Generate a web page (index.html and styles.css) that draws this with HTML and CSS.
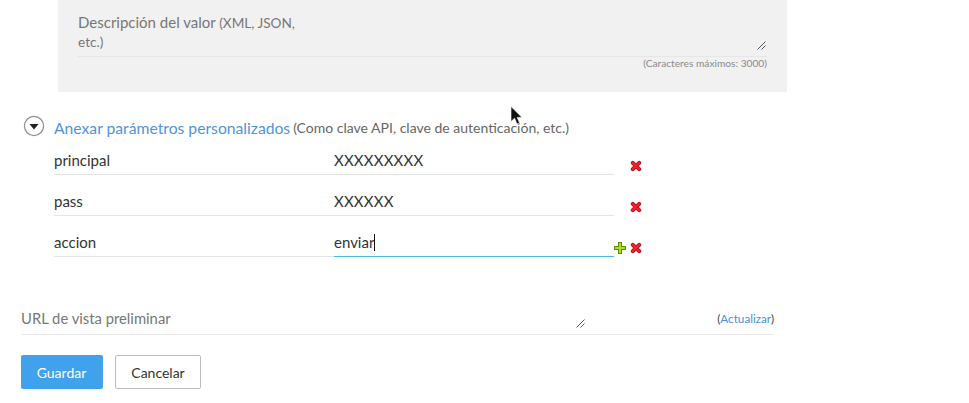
FILE: index.html
```html
<!DOCTYPE html>
<html lang="es">
<head>
<meta charset="utf-8">
<title>Parámetros</title>
<link rel="stylesheet" href="styles.css">
</head>
<body>
<section class="panel">
  <div class="desc-field">
    <div class="desc-text">Descripción del valor <span class="desc-small">(XML, JSON,</span><br><span class="desc-small">etc.)</span></div>
    <svg class="grip grip-desc" width="9" height="9" viewBox="0 0 9 9"><path d="M0.5 8.5L8.5 0.5M4.5 8.5L8.5 4.5" stroke="#555" stroke-width="1" fill="none"/></svg>
  </div>
  <div class="limit">(Caracteres máximos: 3000)</div>
</section>

<div class="toggle-line">
  <svg class="toggle" width="22" height="22" viewBox="0 0 22 22"><circle cx="11" cy="11" r="9.6" fill="#fff" stroke="#8f8f8f" stroke-width="1.2"/><path d="M6.5 9h9L11 14.5z" fill="#222"/></svg>
  <a class="link-big">Anexar parámetros personalizados</a>
  <span class="hint">(Como clave API, clave de autenticación, etc.)</span>
</div>

<div class="params">
  <div class="param">
    <div class="cells"><span class="name">principal</span><span class="value value-x">XXXXXXXXX</span></div>
    <div class="actions">
      <svg class="x" width="12" height="12" viewBox="0 0 12 12"><path d="M2.8 2.8L9.2 9.2M9.2 2.8L2.8 9.2" stroke="#a80f16" stroke-width="4" stroke-linecap="round" fill="none"/><path d="M2.8 2.8L9.2 9.2M9.2 2.8L2.8 9.2" stroke="#f4202a" stroke-width="2.4" stroke-linecap="round" fill="none"/></svg>
    </div>
  </div>
  <div class="param">
    <div class="cells"><span class="name">pass</span><span class="value value-x">XXXXXX</span></div>
    <div class="actions">
      <svg class="x" width="12" height="12" viewBox="0 0 12 12"><path d="M2.8 2.8L9.2 9.2M9.2 2.8L2.8 9.2" stroke="#a80f16" stroke-width="4" stroke-linecap="round" fill="none"/><path d="M2.8 2.8L9.2 9.2M9.2 2.8L2.8 9.2" stroke="#f4202a" stroke-width="2.4" stroke-linecap="round" fill="none"/></svg>
    </div>
  </div>
  <div class="param">
    <div class="cells"><span class="name">accion</span><span class="value value-active">enviar<i class="caret"></i></span></div>
    <div class="actions">
      <svg class="plus" width="12" height="12" viewBox="0 0 12 12" shape-rendering="crispEdges"><path d="M4.5 .5h3v4h4v3h-4v4h-3v-4h-4v-3h4z" fill="#a6e01c" stroke="#5f8c00" stroke-width="1"/></svg>
      <svg class="x" width="12" height="12" viewBox="0 0 12 12"><path d="M2.8 2.8L9.2 9.2M9.2 2.8L2.8 9.2" stroke="#a80f16" stroke-width="4" stroke-linecap="round" fill="none"/><path d="M2.8 2.8L9.2 9.2M9.2 2.8L2.8 9.2" stroke="#f4202a" stroke-width="2.4" stroke-linecap="round" fill="none"/></svg>
    </div>
  </div>
</div>

<div class="preview">
  <span class="preview-label">URL de vista preliminar</span>
  <svg class="grip grip-url" width="9" height="9" viewBox="0 0 9 9"><path d="M0.5 8.5L8.5 0.5M4.5 8.5L8.5 4.5" stroke="#555" stroke-width="1" fill="none"/></svg>
  <span class="refresh">(<a>Actualizar</a>)</span>
</div>

<div class="buttons">
  <button class="btn btn-primary" type="button">Guardar</button>
  <button class="btn btn-plain" type="button">Cancelar</button>
</div>

<svg class="cursor" width="14" height="20" viewBox="0 0 14 20"><path d="M1 0.5V15.5L4.6 12.2 7 18 9.6 17 7.2 11.4H12z" fill="#111" stroke="#fff" stroke-width=".6"/></svg>
</body>
</html>
```
FILE: styles.css
```css
* { box-sizing: border-box; }
html, body { margin: 0; padding: 0; }
body {
  width: 969px;
  height: 403px;
  overflow: hidden;
  position: relative;
  background: #fff;
  font-family: Lato, "Open Sans", sans-serif;
  font-size: 14px;
  color: #333;
}
.panel {
  margin-left: 58px;
  width: 729px;
  height: 92px;
  background: #f1f1f1;
  padding: 13px 20px 0;
}
.desc-field {
  position: relative;
  height: 44px;
  border-bottom: 1px solid #e6e6e6;
}
.desc-text {
  width: 225px;
  font-size: 15px;
  line-height: 18px;
  color: #777;
}
.desc-small { font-size: 13.6px; }
.grip { position: absolute; }
.grip-desc { right: 1px; bottom: 6px; }
.limit {
  text-align: right;
  font-size: 10.2px;
  line-height: 13px;
  color: #8a8a8a;
}
.toggle-line {
  display: flex;
  align-items: flex-start;
  margin-top: 23px;
  padding-left: 23px;
  height: 19px;
}
.toggle { flex: none; margin-right: 9px; }
.link-big { font-size: 15.7px; line-height: 22px; margin-top: 2px; color: #4f94dc; margin-right: 3px; }
.hint { font-size: 14px; line-height: 22px; margin-top: 2px; color: #666; }
.params { padding-left: 54px; }
.param { display: flex; height: 41px; }
.cells {
  display: flex;
  width: 560px;
  height: 41px;
  line-height: 20px;
  font-size: 15px;
  color: #333;
}
.name, .value {
  padding-top: 16px;
  border-bottom: 1px solid #e4e4e4;
}
.name { width: 280px; }
.value { flex: 1; }
.value-x { letter-spacing: .2px; }
.value-active { border-bottom-color: #4db8e8; }
.caret {
  display: inline-block;
  width: 1px;
  height: 17px;
  background: #111;
  vertical-align: -3px;
}
.actions {
  position: relative;
  width: 30px;
}
.x { position: absolute; left: 16px; top: 26px; }
.plus { position: absolute; left: 0; top: 26px; }
.preview {
  position: relative;
  display: flex;
  justify-content: space-between;
  align-items: flex-start;
  width: 753px;
  height: 34px;
  margin: 44px 0 0 21px;
  border-bottom: 1px solid #e8e8e8;
  padding-top: 7px;
}
.preview-label { font-size: 14.8px; line-height: 20px; color: #777; }
.grip-url { left: 555px; top: 18px; }
.refresh { font-size: 11.7px; line-height: 20px; color: #444; }
.refresh a { color: #4a90d9; }
.buttons {
  display: flex;
  gap: 12px;
  margin: 20px 0 0 21px;
}
.btn {
  height: 34px;
  border-radius: 2px;
  font-family: inherit;
  font-size: 14px;
  padding: 0;
}
.btn-primary { width: 82px; border: 0; background: #40a2ec; color: #fff; padding-right: 1px; }
.btn-plain { width: 86px; border: 1px solid #bdbdbd; background: #fff; color: #333; }
.cursor { position: absolute; left: 510px; top: 106px; }
```
